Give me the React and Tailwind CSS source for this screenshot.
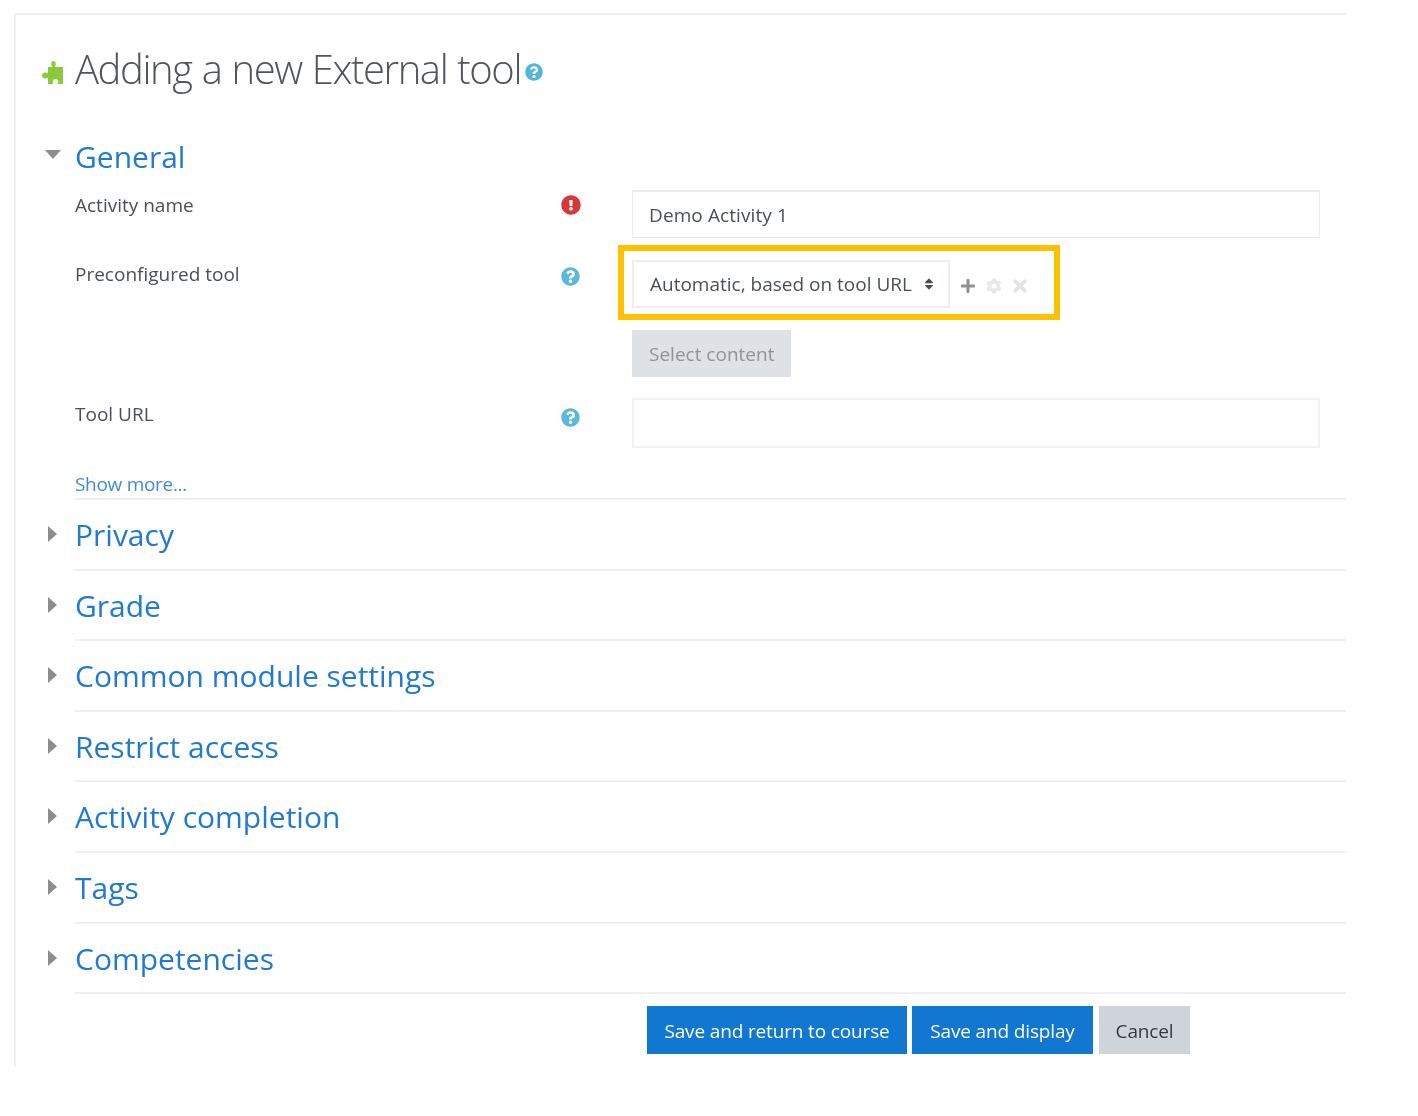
import React from 'react';
import { FaCog, FaExclamationCircle, FaPlus, FaQuestionCircle, FaSort, FaTimes } from 'react-icons/fa';

const SECTIONS = ['Privacy', 'Grade', 'Common module settings', 'Restrict access', 'Activity completion', 'Tags', 'Competencies'];

const Help = () => <FaQuestionCircle className="w-[19px] h-[19px] text-[#5bb8dc]" />;

const PuzzleIcon = () => (
    <svg viewBox="0 0 22 24" className="mt-[6px] w-[22px] h-[24px] text-[#8ac93a]" fill="currentColor">
        <path d="M7 7h4.5c-1-1.2-1.3-2-1.3-3.2C10.200 2 11.300 1 12.500 1s2.300 1 2.300 2.800c0 1.200-.3 2-1.300 3.200H22v17h-5.500c.6-1 .8-1.600.8-2.400 0-1.500-1.100-2.600-2.800-2.600s-2.800 1.100-2.800 2.600c0 .8.2 1.400.8 2.400H7v-6.300c-1 .6-1.700.8-2.500.8C2.500 18.500 1 17.300 1 15.500s1.500-3 3.500-3c.8 0 1.500.2 2.500.8V7z" />
    </svg>
);

const CaretRight = () => (
    <svg viewBox="0 0 9 16" className="absolute -left-[27px] top-[26px] w-[9px] h-[16px] text-[#8d8d8d]" fill="currentColor">
        <polygon points="0,0 9,8 0,16" />
    </svg>
);

const CaretDown = () => (
    <svg viewBox="0 0 16 9" className="absolute -left-[30px] top-[24px] w-[16px] h-[9px] text-[#8d8d8d]" fill="currentColor">
        <polygon points="0,0 16,0 8,9" />
    </svg>
);

const FieldRow = ({ label, icon, className, labelClass = 'pt-[2px]', iconClass, children }) => (
    <div className={`flex ${className}`}>
        <div className={`w-[486px] text-[19px] leading-[26px] text-[#4a5056] ${labelClass}`}>{label}</div>
        <div className={`w-[71px] ${iconClass}`}>{icon}</div>
        <div className="flex-1">{children}</div>
    </div>
);

const SectionRow = ({ title }) => (
    <div className="relative h-[70.6px] ml-[59px] border-b-2 border-[#efeff2]">
        <CaretRight />
        <h3 className="pt-[13px] text-[30px] leading-[44px] text-[#2079d3]">{title}</h3>
    </div>
);

export default function App() {
    return (
        <div className="w-[1418px] h-[1116px] bg-white pl-[14px] pt-[13px] font-['Open_Sans',sans-serif] blur-[0.4px]">
            <div className="w-[1332px] h-[1054px] border-l-2 border-t-2 border-[#f0f0f0]">
                <div className="flex items-center h-[111px] pl-[25px] pb-[4px]">
                    <PuzzleIcon />
                    <h2 className="ml-[12px] text-[40px] leading-[56px] font-light tracking-[-1.4px] [word-spacing:1px] text-[#50555a]">Adding a new External tool</h2>
                    <FaQuestionCircle className="ml-[4px] mt-[6px] w-[18px] h-[18px] text-[#4fb7dc]" />
                </div>
                <div className="relative h-[50px] ml-[59px]">
                    <CaretDown />
                    <h3 className="pt-[9px] text-[30px] leading-[44px] text-[#2079d3]">General</h3>
                </div>
                <div className="ml-[59px]">
                    <FieldRow
                        label="Activity name"
                        icon={<FaExclamationCircle className="w-[20px] h-[20px] text-[#d9363a]" />}
                        iconClass="pt-[5px]"
                        className="h-[69px] pt-[14px]"
                    >
                        <div className="w-[688px] h-[48px] border border-t-2 border-[#e9ecef] pl-[16px] text-[19px] leading-[46px] tracking-[0.1px] text-[#4a5056]">Demo Activity 1</div>
                    </FieldRow>
                    <FieldRow label="Preconfigured tool" icon={<Help />} labelClass="pt-[1px]" iconClass="pt-[7px]" className="h-[152px] pt-[15px]">
                        <div className="relative flex items-center h-[48px]">
                            <div className="flex items-center w-[318px] h-[48px] border-2 border-[#eceef1] pl-[16px] text-[19px] text-[#4a5056]">
                                <span>Automatic, based on tool URL</span>
                                <FaSort className="ml-[11px] w-[12px] h-[14px] text-[#495057]" />
                            </div>
                            <FaPlus className="ml-[10px] mt-[4px] w-[16px] h-[16px] text-[#8f8f8f]" />
                            <FaCog className="ml-[10px] mt-[4px] w-[16px] h-[16px] text-[#e8e8e8]" />
                            <FaTimes className="ml-[8px] mt-[4px] w-[20px] h-[20px] text-[#e4e4e4]" />
                            <div className="absolute -left-[14px] -top-[15px] w-[442px] h-[75px] border-[6px] border-[#ffc000] rounded-[1px]" />
                        </div>
                        <button className="mt-[22px] w-[159px] h-[47px] bg-[#dee2e6] text-left pl-[17px] pt-[2px] text-[19px] text-[#8f9498]">Select content</button>
                    </FieldRow>
                    <FieldRow label="Tool URL" icon={<Help />} labelClass="pt-[3px]" iconClass="pt-[10px]" className="h-[74px] pt-[1px]">
                        <div className="w-[688px] h-[50px] border-2 border-[#f0f1f3]" />
                    </FieldRow>
                    <div className="h-[29px] pt-[1px] leading-[24px] text-[19px] tracking-[-0.3px] text-[#3f8bd8] border-b-2 border-[#efeff2]">Show more...</div>
                </div>
                <div>
                    {SECTIONS.map((title) => <SectionRow key={title} title={title} />)}
                </div>
                <div className="flex ml-[631px] mt-[12px] text-[19px] tracking-[-0.15px]">
                    <button className="w-[260px] h-[48px] pt-[2px] bg-[#1177d1] text-white">Save and return to course</button>
                    <button className="ml-[5px] w-[181px] h-[48px] pt-[2px] bg-[#1177d1] text-white">Save and display</button>
                    <button className="ml-[6px] w-[91px] h-[48px] pt-[2px] bg-[#ced4da] text-[#373a3c]">Cancel</button>
                </div>
            </div>
        </div>
    );
}
